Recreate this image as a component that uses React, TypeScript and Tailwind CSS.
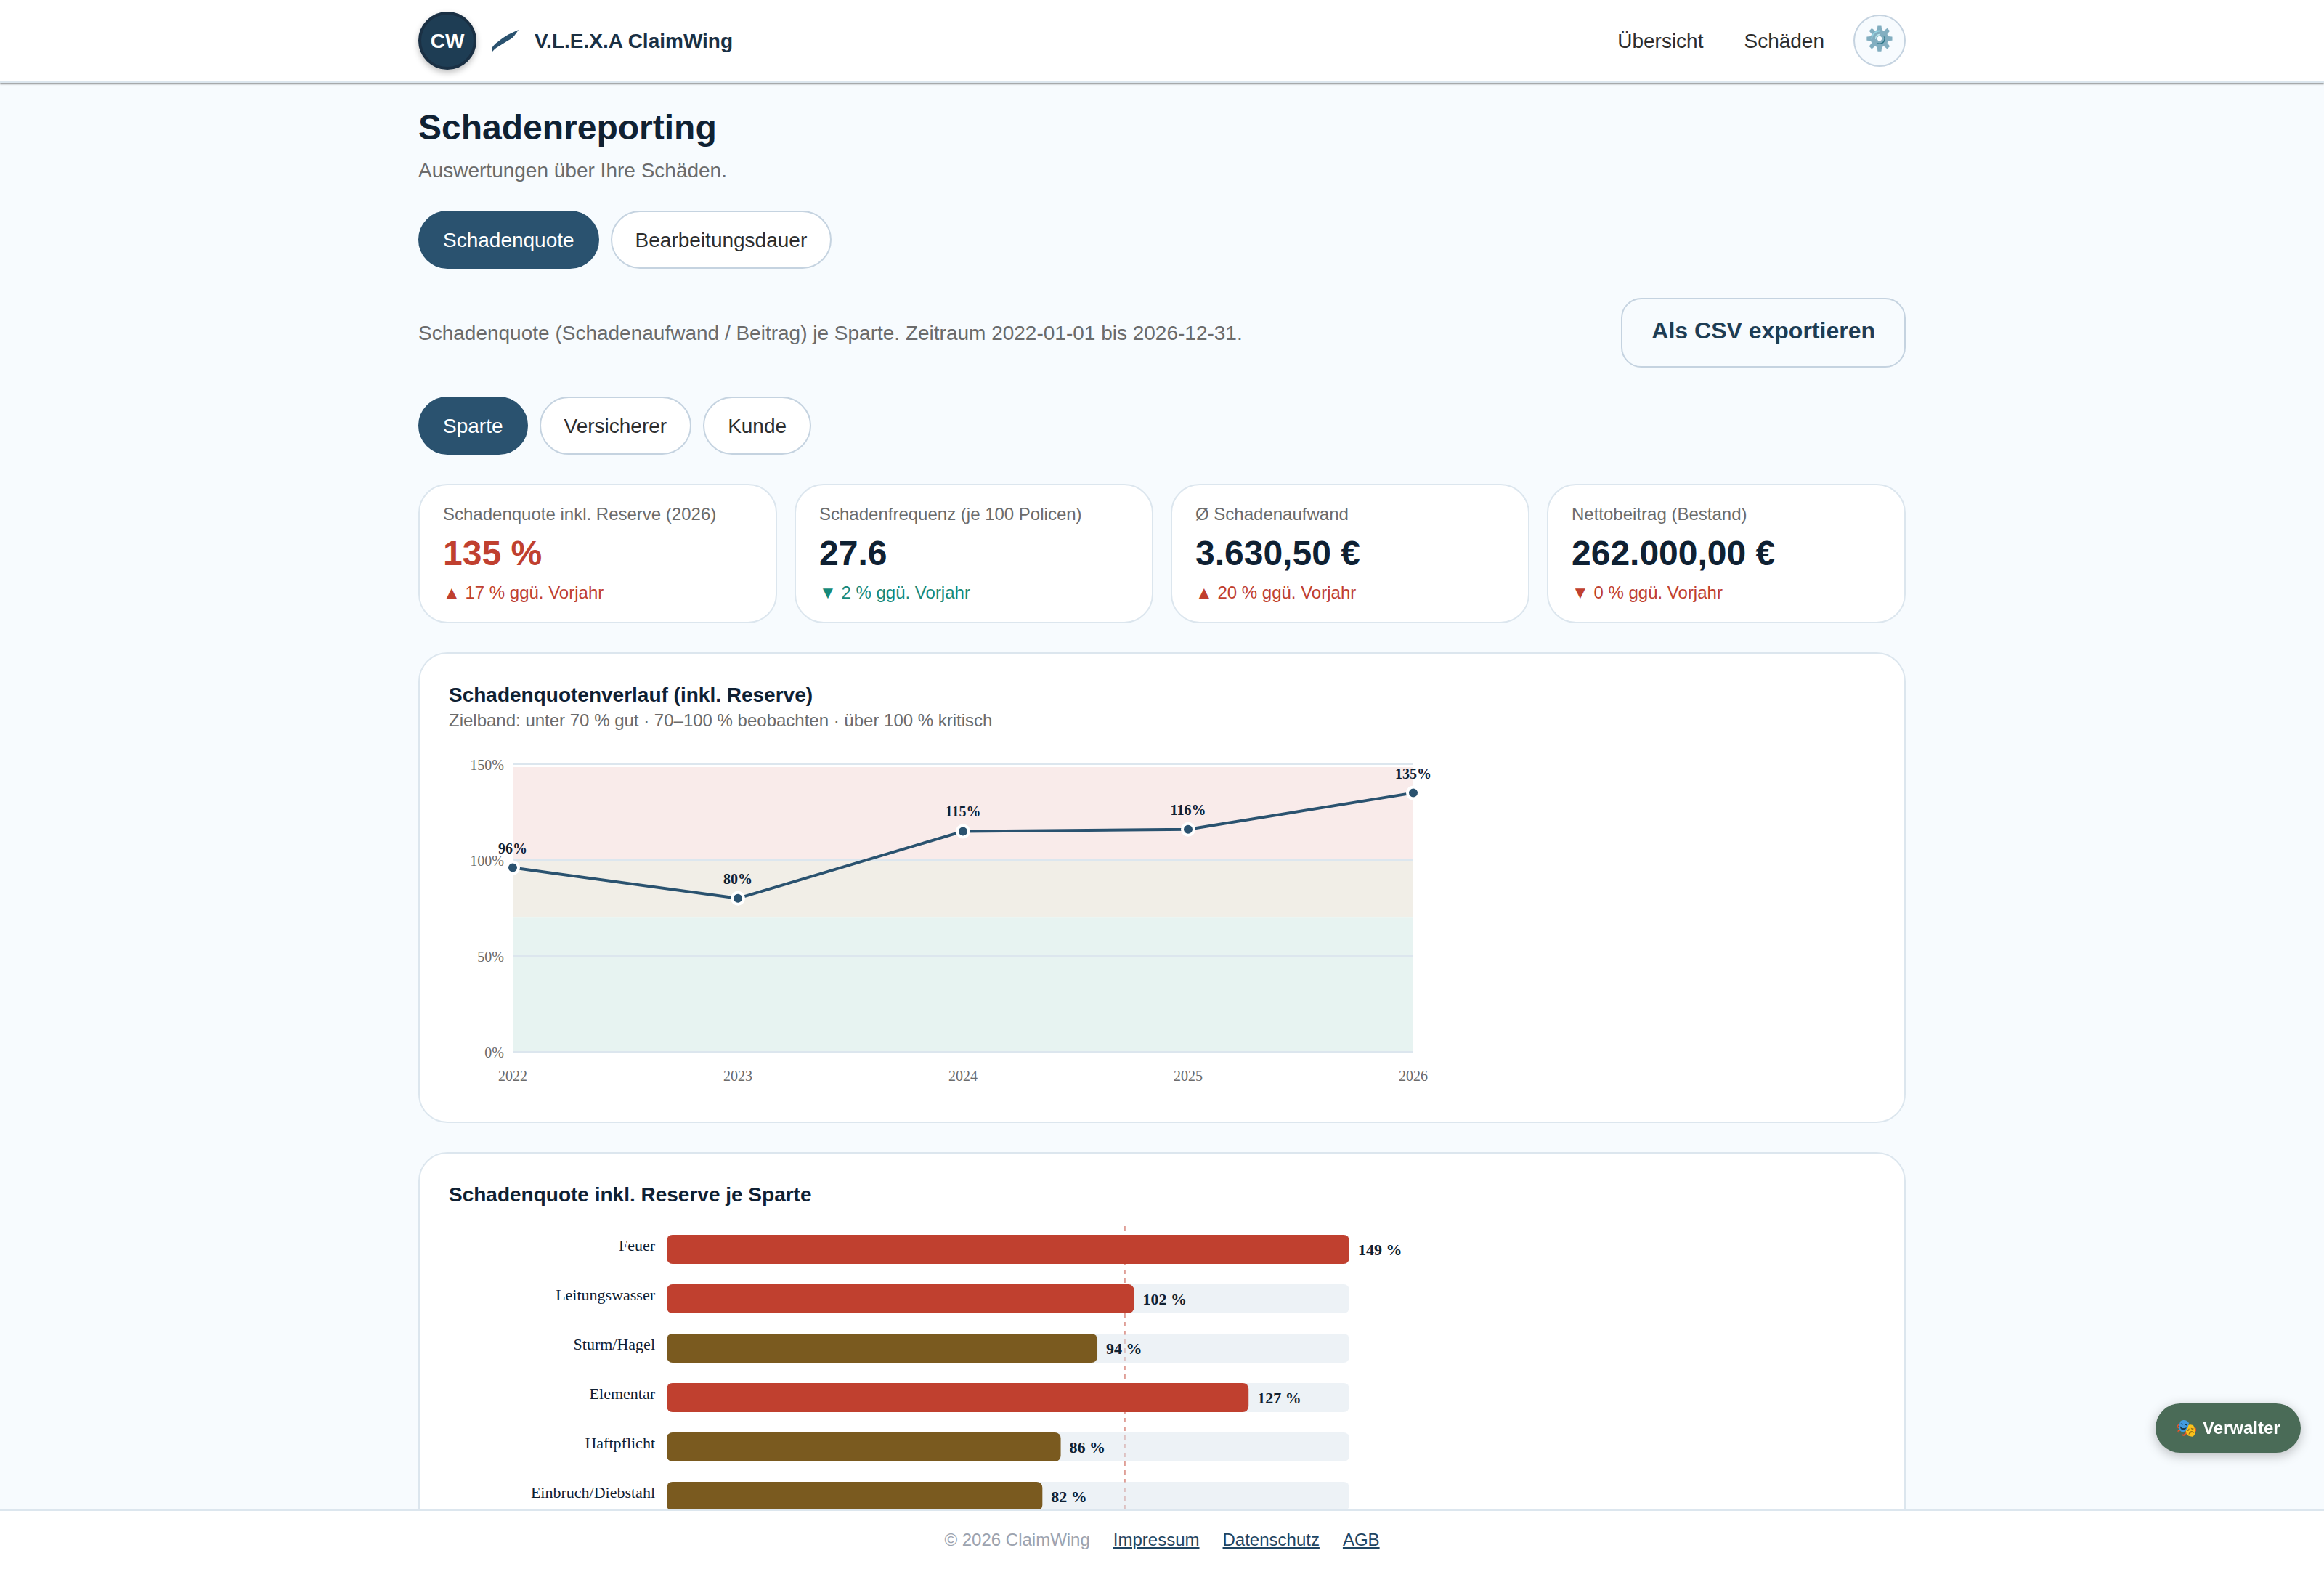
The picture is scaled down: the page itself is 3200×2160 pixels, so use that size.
type Tone = 'neutral' | 'good' | 'bad'

interface Kpi {
  label: string
  value: string
  valueTone: Tone
  direction: 'up' | 'down'
  delta: string
  deltaTone: Tone
}

const kpis: Kpi[] = [
  { label: 'Schadenquote inkl. Reserve (2026)', value: '135 %', valueTone: 'bad', direction: 'up', delta: '17 %', deltaTone: 'bad' },
  { label: 'Schadenfrequenz (je 100 Policen)', value: '27.6', valueTone: 'neutral', direction: 'down', delta: '2 %', deltaTone: 'good' },
  { label: 'Ø Schadenaufwand', value: '3.630,50 €', valueTone: 'neutral', direction: 'up', delta: '20 %', deltaTone: 'bad' },
  { label: 'Nettobeitrag (Bestand)', value: '262.000,00 €', valueTone: 'neutral', direction: 'down', delta: '0 %', deltaTone: 'bad' },
]

const history = [
  { year: 2022, quote: 96 },
  { year: 2023, quote: 80 },
  { year: 2024, quote: 115 },
  { year: 2025, quote: 116 },
  { year: 2026, quote: 135 },
]

const sparten = [
  { name: 'Feuer', quote: 149 },
  { name: 'Leitungswasser', quote: 102 },
  { name: 'Sturm/Hagel', quote: 94 },
  { name: 'Elementar', quote: 127 },
  { name: 'Haftpflicht', quote: 86 },
  { name: 'Einbruch/Diebstahl', quote: 82 },
]

const toneClass: Record<Tone, string> = {
  neutral: 'text-[#0f2133]',
  good: 'text-[#16897a]',
  bad: 'text-[#c0402f]',
}

function Header() {
  return (
    <header className="relative z-10 shrink-0 border-b-2 border-[#dce6ee] bg-white shadow-[0_2px_2px_rgba(0,0,0,0.35)]">
      <div className="mx-auto flex h-28 w-full max-w-[2048px] items-center">
        <a href="#" className="flex items-center text-[28px] font-bold text-[#1a3044]">
          <span className="flex size-20 items-center justify-center rounded-full border-4 border-[#1a3044] bg-[#1e3d54] pt-0.5 text-white shadow-[0_4px_8px_rgba(0,0,0,0.25)]">
            CW
          </span>
          <svg viewBox="0 0 40 40" className="ml-5 size-10" aria-hidden="true">
            <path d="M2 35 V29 C4 26 6 24 9 22 C14 18 19 14 24 11.5 C29 9 34 7 38 5 C36 8 34 11 31.5 14 C29 17 26 18.500 22.500 20.500 C18 23 14 26 10.500 28 C7 30 4 32.500 2 35 Z" fill="#2a526f" />
          </svg>
          <span className="ml-5 pt-0.5">V.L.E.X.A ClaimWing</span>
        </a>
        <nav className="ml-auto flex items-center gap-14 pt-0.5 text-[28px] text-[#2d2d2d]">
          <a href="#">Übersicht</a>
          <a href="#">Schäden</a>
        </nav>
        <button
          type="button"
          aria-label="Einstellungen"
          className="ml-10 flex size-[72px] items-center justify-center rounded-full border-2 border-[#c5d3e0] bg-[#f7fbfe] pb-1.5 text-[32px] leading-none"
        >
          ⚙️
        </button>
      </div>
    </header>
  )
}

function PillGroup({ label, items }: { label: string; items: string[] }) {
  return (
    <div role="group" aria-label={label} className="flex flex-wrap gap-4">
      {items.map((item, i) => (
        <button
          key={item}
          type="button"
          aria-pressed={i === 0}
          className={
            i === 0
              ? 'h-20 rounded-full border-2 border-[#2a526f] bg-[#2a526f] px-8 pt-0.5 text-[28px] text-white'
              : 'h-20 rounded-full border-2 border-[#c5d3e0] bg-white px-8 pt-0.5 text-[28px] text-[#2d2d2d]'
          }
        >
          {item}
        </button>
      ))}
    </div>
  )
}

function KpiCard({ kpi }: { kpi: Kpi }) {
  return (
    <div className="rounded-[40px] border-2 border-[#dce6ee] bg-white px-8 py-5 text-2xl">
      <p className="leading-10 text-[#6b6b6b]">{kpi.label}</p>
      <p className={`text-5xl leading-[68px] font-bold ${toneClass[kpi.valueTone]}`}>{kpi.value}</p>
      <p className={`leading-10 ${toneClass[kpi.deltaTone]}`}>
        {kpi.direction === 'up' ? '▲' : '▼'} {kpi.delta} ggü. Vorjahr
      </p>
    </div>
  )
}

function TrendChart() {
  const left = 88
  const right = 1328
  const bottom = 424
  const y = (v: number) => bottom - v * 2.64
  const x = (i: number) => left + i * 310
  const points = history.map((h, i) => `${x(i)},${y(h.quote)}`).join(' ')

  return (
    <svg
      viewBox="0 0 1360 480"
      className="mt-3.5 block w-full max-w-[1360px] overflow-visible font-['Liberation_Serif',serif] text-xl"
      role="img"
      aria-label="Schadenquotenverlauf"
    >
      <rect x={left} y={y(148.5)} width={right - left} height={y(100) - y(148.5)} fill="#f9ebea" />
      <rect x={left} y={y(100)} width={right - left} height={y(70) - y(100)} fill="#f1eee7" />
      <rect x={left} y={y(70)} width={right - left} height={y(0) - y(70)} fill="#e7f3f1" />
      {[0, 50, 100, 150].map((tick) => (
        <g key={tick}>
          <line x1={left} x2={right} y1={y(tick)} y2={y(tick)} stroke="#dce6ee" strokeWidth="2" />
          <text x={left - 12} y={y(tick) + 8} textAnchor="end" fill="#6b6b6b">
            {tick}%
          </text>
        </g>
      ))}
      <polyline points={points} fill="none" stroke="#2a526f" strokeWidth="4" />
      {history.map((h, i) => (
        <g key={h.year}>
          <circle cx={x(i)} cy={y(h.quote)} r="8" fill="#2a526f" stroke="#fff" strokeWidth="4" />
          <text x={x(i)} y={y(h.quote) - 20} textAnchor="middle" fill="#0f2133" className="font-bold">
            {h.quote}%
          </text>
          <text x={x(i)} y={bottom + 40} textAnchor="middle" fill="#6b6b6b">
            {h.year}
          </text>
        </g>
      ))}
    </svg>
  )
}

function SpartenChart() {
  const left = 300
  const width = 940
  const scale = (v: number) => (v / 149) * width

  return (
    <svg
      viewBox="0 0 1360 420"
      className="mt-[26px] block w-full max-w-[1360px] font-['Liberation_Serif',serif] text-[22px]"
      role="img"
      aria-label="Schadenquote je Sparte"
    >
      <line
        x1={left + scale(100)}
        x2={left + scale(100)}
        y1="0"
        y2="420"
        stroke="#c0402f"
        strokeOpacity="0.5"
        strokeWidth="2"
        strokeDasharray="6 6"
      />
      {sparten.map((s, i) => {
        const top = 12 + i * 68
        return (
          <g key={s.name} fill="#0f2133">
            <text x={left - 16} y={top + 22} textAnchor="end">
              {s.name}
            </text>
            <rect x={left} y={top} width={width} height="40" rx="8" fill="#dce6ee" fillOpacity="0.5" />
            <rect x={left} y={top} width={scale(s.quote)} height="40" rx="8" fill={s.quote > 100 ? '#c0402f' : '#7a5a1f'} />
            <text x={left + scale(s.quote) + 12} y={top + 28} className="font-bold">
              {s.quote} %
            </text>
          </g>
        )
      })}
    </svg>
  )
}

function Footer() {
  return (
    <footer className="flex shrink-0 justify-center gap-8 border-t-2 border-[#dce6ee] bg-white py-[22px] text-2xl leading-9 text-[#9ca3af]">
      <span>© 2026 ClaimWing</span>
      <a href="#" className="text-[#1f4562] underline">Impressum</a>
      <a href="#" className="text-[#1f4562] underline">Datenschutz</a>
      <a href="#" className="text-[#1f4562] underline">AGB</a>
    </footer>
  )
}

export default function App() {
  return (
    <div className="flex h-screen flex-col bg-[#f7fbfe] font-['Liberation_Sans',Arial,sans-serif] text-[#2d2d2d]">
      <Header />
      <main className="min-h-0 flex-1 overflow-y-auto [scrollbar-width:none]">
        <div className="mx-auto flex w-full max-w-[2048px] flex-col gap-10 pt-8 pb-10">
          <div>
            <h1 className="text-5xl leading-[60px] font-bold text-[#0f2133]">Schadenreporting</h1>
            <p className="mt-3.5 text-[28px] leading-[30px] text-[#6b6b6b]">Auswertungen über Ihre Schäden.</p>
          </div>

          <PillGroup label="Auswertung" items={['Schadenquote', 'Bearbeitungsdauer']} />

          <div className="flex items-center justify-between gap-8">
            <p className="pt-0.5 text-[28px] text-[#6b6b6b]">
              Schadenquote (Schadenaufwand / Beitrag) je Sparte. Zeitraum 2022-01-01 bis 2026-12-31.
            </p>
            <a
              href="#"
              className="flex h-24 items-center rounded-[28px] border-2 border-[#c5d3e0] px-10 pb-1.5 text-[32px] font-bold text-[#1e3d54]"
            >
              Als CSV exportieren
            </a>
          </div>

          <PillGroup label="Gruppierung" items={['Sparte', 'Versicherer', 'Kunde']} />

          <div className="grid grid-cols-4 gap-6">
            {kpis.map((kpi) => (
              <KpiCard key={kpi.label} kpi={kpi} />
            ))}
          </div>

          <section className="rounded-[40px] border-2 border-[#dce6ee] bg-white p-10">
            <h2 className="text-[28px] leading-[34px] font-bold text-[#0f2133]">Schadenquotenverlauf (inkl. Reserve)</h2>
            <p className="text-2xl leading-9 text-[#6b6b6b]">
              Zielband: unter 70 % gut · 70–100 % beobachten · über 100 % kritisch
            </p>
            <TrendChart />
          </section>

          <section className="rounded-[40px] border-2 border-[#dce6ee] bg-white p-10">
            <h2 className="text-[28px] leading-[34px] font-bold text-[#0f2133]">Schadenquote inkl. Reserve je Sparte</h2>
            <SpartenChart />
          </section>
        </div>
      </main>
      <Footer />

      <button
        type="button"
        className="fixed right-8 bottom-40 z-20 h-[68px] w-[200px] rounded-full bg-[#4a6b57] text-2xl font-bold text-white shadow-[0_4px_16px_rgba(0,0,0,0.25)]"
      >
        🎭 Verwalter
      </button>
    </div>
  )
}
